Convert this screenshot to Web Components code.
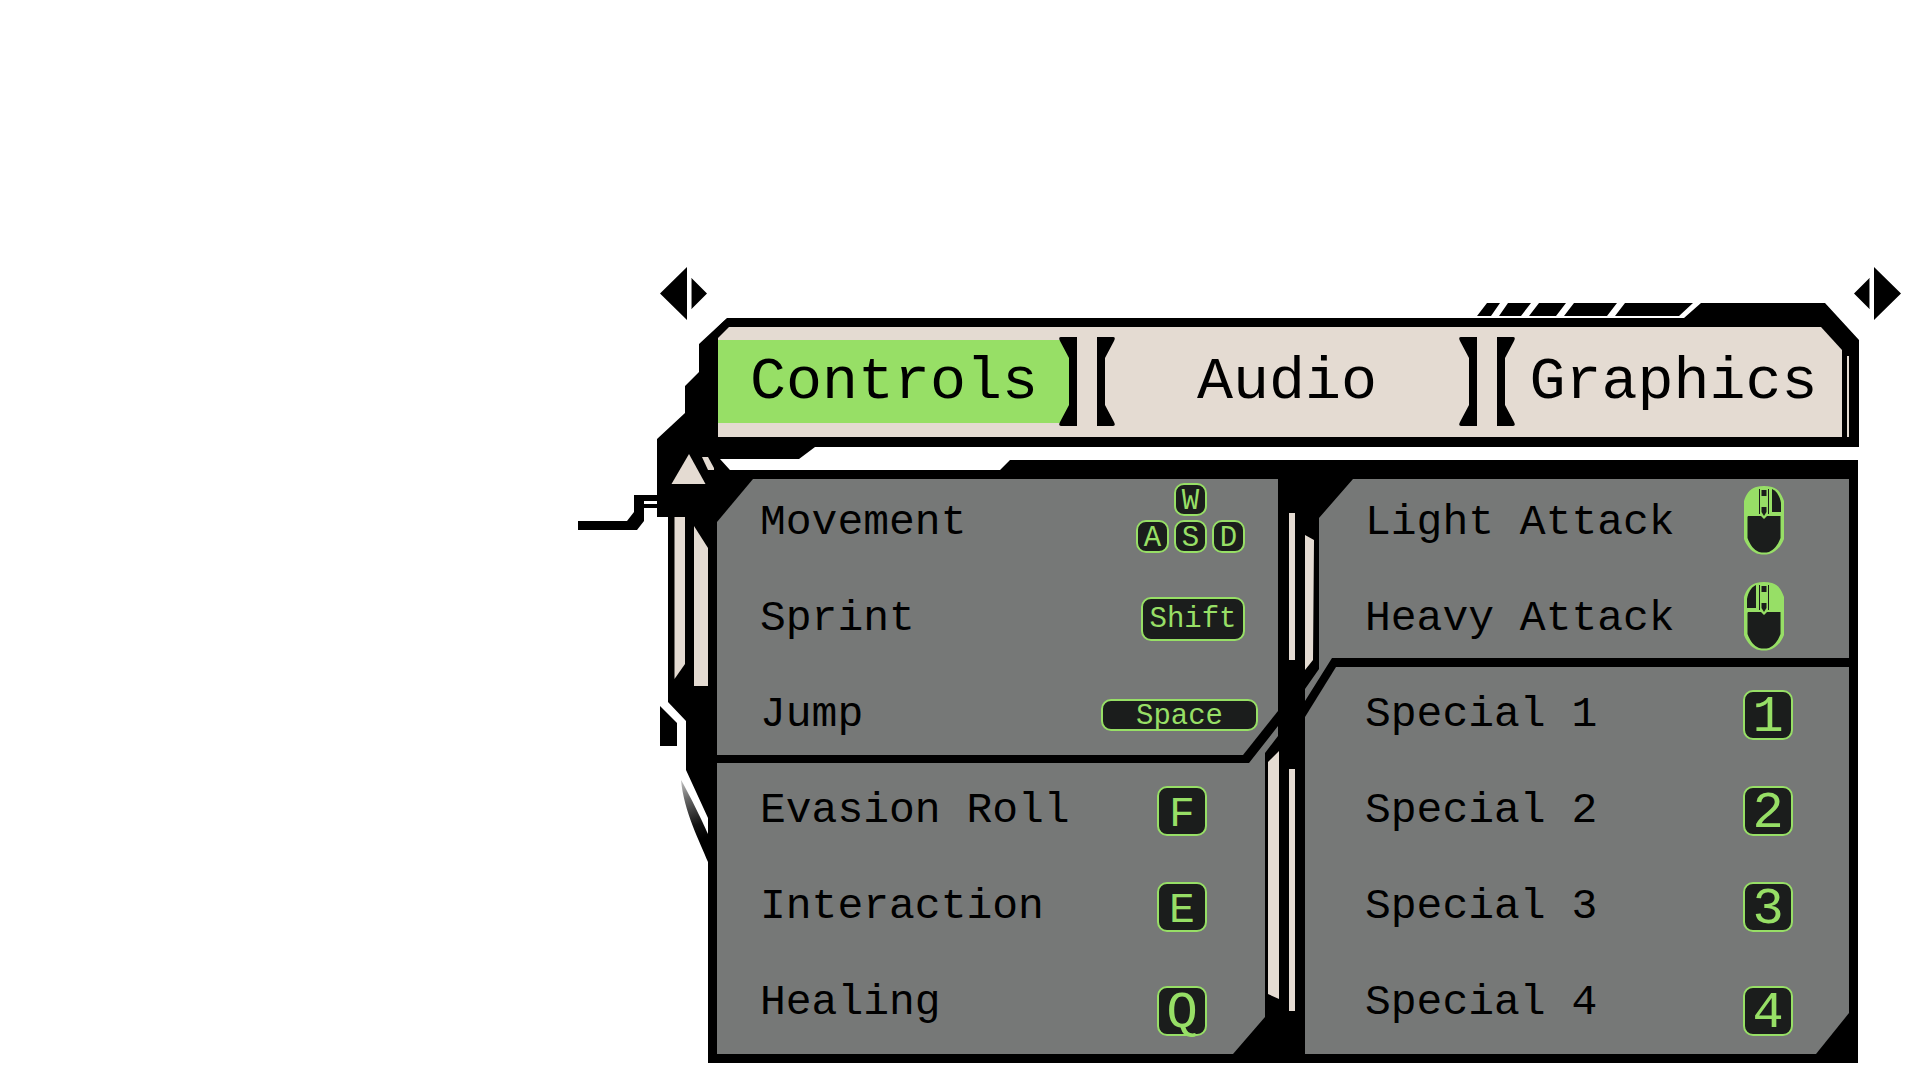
<!DOCTYPE html>
<html lang="en">
<head>
<meta charset="utf-8">
<title>Settings - Controls</title>
<style>
  :root {
    --ink: #000;
    --sand: #e4dbd2;
    --lime: #97df66;
    --steel: #767877;
    --coal: #1b1d1c;
  }
  body {
    margin: 0;
    background: #fff;
    color: var(--ink);
    font-family: "Liberation Mono", "DejaVu Sans Mono", monospace;
  }
</style>
</head>
<body>
<settings-menu>
  <menu-arrow slot="arrows" label="Previous tab"></menu-arrow>
  <menu-arrow slot="arrows" label="Next tab" flip></menu-arrow>
  <frame-ornament slot="ornament"></frame-ornament>
  <tab-bar slot="tabs">
    <menu-tab open-start selected style="--grow:359">Controls</menu-tab>
    <menu-tab style="--grow:380">Audio</menu-tab>
    <menu-tab open-end style="--grow:345">Graphics</menu-tab>
  </tab-bar>
  <control-panel slot="panel">
    <binding-group slot="left" shape="upper-left">
      <key-binding name="Movement" align="end" top><key-cluster></key-cluster></key-binding>
      <key-binding name="Sprint" align="end"><key-cap size="wide">Shift</key-cap></key-binding>
      <key-binding name="Jump" align="start"><key-cap size="bar">Space</key-cap></key-binding>
    </binding-group>
    <binding-group slot="left" shape="lower-left">
      <key-binding name="Evasion Roll"><key-cap>F</key-cap></key-binding>
      <key-binding name="Interaction"><key-cap>E</key-cap></key-binding>
      <key-binding name="Healing" low><key-cap size="large">Q</key-cap></key-binding>
    </binding-group>
    <spine-ornament slot="spine"></spine-ornament>
    <binding-group slot="right" shape="upper-right">
      <key-binding name="Light Attack" align="start"><mouse-icon button="left"></mouse-icon></key-binding>
      <key-binding name="Heavy Attack" align="start"><mouse-icon button="right"></mouse-icon></key-binding>
    </binding-group>
    <binding-group slot="right" shape="lower-right">
      <key-binding name="Special 1"><key-cap size="large">1</key-cap></key-binding>
      <key-binding name="Special 2"><key-cap size="large">2</key-cap></key-binding>
      <key-binding name="Special 3"><key-cap size="large">3</key-cap></key-binding>
      <key-binding name="Special 4" low><key-cap size="large">4</key-cap></key-binding>
    </binding-group>
  </control-panel>
</settings-menu>

<script>
function define(name, render) {
  customElements.define(name, class extends HTMLElement {
    constructor() {
      super();
      this.attachShadow({ mode: "open" });
    }
    connectedCallback() {
      this.shadowRoot.innerHTML = render(this);
    }
  });
}

define("settings-menu", () => `
  <style>
    :host {
      display: grid;
      grid-template-columns: 578fr 130px 1151fr 61px;
      grid-template-rows: auto auto auto;
      padding: 267px 0 16px;
    }
    .arrows {
      grid-column: 2 / 5;
      display: flex;
      justify-content: space-between;
      padding: 0 19px 0 82px;
      margin-bottom: -17px;
    }
    .ornament { grid-column: 2; grid-row: 2 / 4; z-index: 1; }
    .tabs { grid-column: 3; grid-row: 2; min-width: 0; }
    .panel { grid-column: 3; grid-row: 3; min-width: 0; padding: 13px 1px 0 0; }
  </style>
  <div class="arrows"><slot name="arrows"></slot></div>
  <div class="ornament"><slot name="ornament"></slot></div>
  <nav class="tabs"><slot name="tabs"></slot></nav>
  <main class="panel"><slot name="panel"></slot></main>`);

define("menu-arrow", el => `
  <style>
    :host { display: block; }
    :host([flip]) svg { transform: scaleX(-1); }
    button { display: block; border: 0; padding: 0; background: none; cursor: pointer; }
    svg { display: block; }
  </style>
  <button type="button" aria-label="${el.getAttribute("label")}">
    <svg width="47" height="53" viewBox="0 0 47 53" aria-hidden="true">
      <path d="M0 26.5 27 0V53Z M31.5 11 47 26.5 31.5 42Z"/>
      <path d="M31.5 11V42" stroke="#888" fill="none"/>
    </svg>
  </button>`);

define("frame-ornament", () => `
  <style>
    :host { display: block; }
    svg { display: block; overflow: visible; pointer-events: none; }
  </style>
  <svg width="130" height="567" viewBox="578 303 130 567" aria-hidden="true">
    <defs>
      <linearGradient id="fade" x1="682" y1="782" x2="704" y2="838" gradientUnits="userSpaceOnUse">
        <stop offset="0" stop-color="#bbb"/><stop offset=".3" stop-color="#666"/>
        <stop offset=".75" stop-color="#111"/><stop offset="1"/>
      </linearGradient>
    </defs>
    <path d="M727 318 699 344V372L685 386V413L657 439V517H668V702L686 721V770L708 818V480H739L720 459H799L815 447H709V340Z"/>
    <path d="M578 521H627L634 512V495H658V501H644V504H658V508H644V521L637 530H578Z"/>
    <path d="M660 706 677 723V746H660Z"/>
    <path d="M681 780C687 790 702 820 708 834V862C700 842 684 812 681 780Z" fill="url(#fade)"/>
    <g fill="#e4dbd2">
      <path d="M689 454 705.5 484H671.5Z"/>
      <path d="M702 457H708L714 468V470H708Z"/>
      <path d="M674.5 517H685V664L674.5 679Z"/>
      <path d="M694 526 708 548V686H694Z"/>
    </g>
  </svg>`);

define("tab-bar", () => `
  <style>
    :host { display: block; position: relative; }
    .frame {
      padding: 24px 17px 10px 10px;
      background: var(--ink);
      clip-path: polygon(0 34px, 19px 15px, calc(100% - 175px) 15px, calc(100% - 158px) 0,
        calc(100% - 34px) 0, 100% 37px, 100% 100%, 0 100%);
    }
    .tabs {
      display: flex;
      gap: 20px;
      padding: 10px 0 11px;
      background: var(--sand);
      clip-path: polygon(0 11px, 11px 0, calc(100% - 21px) 0, 100% 23px, 100% 100%, 0 100%);
    }
    .slashes { position: absolute; top: 0; right: 166px; }
    .slit { position: absolute; top: 53px; right: 10px; bottom: 10px; width: 2px; background: var(--sand); }
  </style>
  <div class="frame"><div class="tabs" role="tablist"><slot></slot></div></div>
  <svg class="slashes" width="216" height="13" viewBox="0 0 216 13" aria-hidden="true">
    <path d="M10 0H23L14 13H0Z M31 0H54L44 13H22Z M62 0H89L79 13H52Z M97 0H140L130 13H87Z M148 0H216L202 13H138Z"/>
  </svg>
  <div class="slit"></div>`);

define("menu-tab", el => {
  const bracket = side => `
    <svg class="${side}" width="18" height="89" viewBox="0 0 18 89" aria-hidden="true">
      <path d="M18 0H2Q-1 0 1 4L10 21V68L1 85Q-1 89 2 89H18Z"/>
    </svg>`;
  return `
  <style>
    :host { display: block; flex: var(--grow) 1 0; min-width: 0; }
    button {
      display: flex;
      align-items: center;
      width: 100%;
      padding: 0;
      border: 0;
      background: none;
      color: inherit;
      font: 60px/81px "Liberation Mono", "DejaVu Sans Mono", monospace;
      cursor: pointer;
    }
    span { flex: 1; min-width: 0; margin: 0 -10px; padding-top: 2px; }
    :host([open-start]) span { margin-left: 0; }
    :host([open-end]) span { margin-right: 0; }
    :host([selected]) span { background: var(--lime); margin-right: -11px; }
    svg { flex: none; display: block; position: relative; }
    .start { transform: scaleX(-1); }
  </style>
  <button type="button" role="tab" aria-selected="${el.hasAttribute("selected")}">
    ${el.hasAttribute("open-start") ? "" : bracket("start")}
    <span><slot></slot></span>
    ${el.hasAttribute("open-end") ? "" : bracket("end")}
  </button>`;
});

define("control-panel", () => `
  <style>
    :host {
      display: grid;
      grid-template-columns: 561fr 27px 544fr;
      padding: 19px 9px 9px;
      background: var(--ink);
      clip-path: polygon(0 10px, 292px 10px, 302px 0, 100% 0, 100% 100%, 0 100%);
    }
    section { display: flex; flex-direction: column; min-width: 0; }
    .left { --label-inset: 43px; --key-width: 162px; --key-inset: 15px; }
    .right { --label-inset: 60px; --key-width: 50px; --key-inset: 56px; }
    .spine { z-index: 1; }
  </style>
  <section class="left"><slot name="left"></slot></section>
  <div class="spine"><slot name="spine"></slot></div>
  <section class="right"><slot name="right"></slot></section>`);

define("spine-ornament", () => `
  <style>
    :host { display: block; }
    svg { display: block; overflow: visible; }
  </style>
  <svg width="27" height="575" viewBox="1278 479 27 575" fill="#e4dbd2" aria-hidden="true">
    <path d="M1289 513H1295V660H1289Z M1305 535 1314 540 1313 660 1305 670Z"/>
    <path d="M1268 762 1279 751V999L1268 994Z M1289 769H1295V1011H1289Z"/>
  </svg>`);

define("binding-group", () => `
  <style>
    :host {
      display: flex;
      flex-direction: column;
      gap: 16px;
      background: var(--steel);
    }
    :host([shape="upper-left"]) {
      padding-top: 4px;
      clip-path: polygon(0 43px, 36px 0, 100% 0, 100% 232px, calc(100% - 35px) 100%, 0 100%);
    }
    :host([shape="lower-left"]) {
      margin-top: -29px;
      padding: 45px 0 11px;
      clip-path: polygon(0 37px, calc(100% - 29px) 37px, 100% 0, 100% 10px, calc(100% - 13px) 27px,
        calc(100% - 13px) calc(100% - 37px), calc(100% - 45px) 100%, 0 100%);
    }
    :host([shape="upper-right"]) {
      padding: 4px 0 42px;
      clip-path: polygon(14px 39px, 48px 0, 100% 0, 100% 179px, 27px 179px, 0 100%, 0 210px, 14px 190px);
    }
    :host([shape="lower-right"]) {
      margin-top: -34px;
      padding: 8px 0 11px;
      clip-path: polygon(31px 0, 100% 0, 100% calc(100% - 41px), calc(100% - 33px) 100%, 0 100%, 0 50px);
    }
  </style>
  <slot></slot>`);

define("key-binding", el => `
  <style>
    :host {
      display: flex;
      align-items: center;
      justify-content: space-between;
      height: 80px;
      padding: 0 var(--key-inset) 0 var(--label-inset);
    }
    .name { font-size: 43px; line-height: 48px; white-space: nowrap; }
    .keys {
      display: flex;
      flex: none;
      box-sizing: border-box;
      width: var(--key-width);
      justify-content: center;
    }
    :host([align="start"]) .keys { justify-content: flex-start; }
    :host([align="end"]) .keys { justify-content: flex-end; padding-right: 18px; }
    :host([top]) .keys { align-self: flex-start; }
    :host([low]) .keys { padding-top: 16px; }
  </style>
  <span class="name">${el.getAttribute("name")}</span>
  <span class="keys"><slot></slot></span>`);

define("key-cap", () => `
  <style>
    :host { display: block; --w: 50px; --h: 50px; --size: 43px; --drop: 6px; }
    :host([size="large"]) { --size: 52px; }
    :host([size="small"]) { --w: 33px; --h: 33px; --size: 29px; --drop: 4px; }
    :host([size="wide"]) { --w: 104px; --h: 44px; --size: 29px; --drop: 0px; }
    :host([size="bar"]) { --w: 157px; --h: 32px; --size: 29px; --drop: 2px; }
    kbd {
      display: flex;
      align-items: center;
      justify-content: center;
      box-sizing: border-box;
      width: var(--w);
      height: var(--h);
      padding-top: var(--drop);
      border: 2px solid var(--lime);
      border-radius: 10px;
      background: var(--coal);
      color: var(--lime);
      font-family: inherit;
      font-size: var(--size);
      line-height: 1;
    }
  </style>
  <kbd><slot></slot></kbd>`);

define("key-cluster", () => `
  <style>
    :host { display: flex; flex-direction: column; align-items: center; gap: 4px; }
    div { display: flex; gap: 5px; }
  </style>
  <key-cap size="small">W</key-cap>
  <div>
    <key-cap size="small">A</key-cap>
    <key-cap size="small">S</key-cap>
    <key-cap size="small">D</key-cap>
  </div>`);

define("mouse-icon", el => {
  const right = el.getAttribute("button") === "right";
  return `
  <style>
    :host { display: block; padding: 0 0 5px 1px; }
    svg { display: block; }
  </style>
  <svg width="40" height="69" viewBox="0 0 40 69" role="img" aria-label="${right ? "Right" : "Left"} mouse button">
    <path fill="#97df66" d="M12 1Q20-1 28 1C35 3 38 9 40 15V53C37 61 31 67 25 68Q20 69 15 68C9 67 3 61 0 53V15C2 9 5 3 12 1Z"/>
    <path fill="#1b1d1c" d="M4 30H17L20 33 23 30H36.500V52C34 59 30 64 25 66Q20 67 15 66C10 64 6 59 3.500 52V31Z"/>
    <path fill="#1b1d1c" d="${right ? "M12 3V26H3V17C4 11 7 5 12 3Z" : "M28 3V26H37V17C36 11 33 5 28 3Z"}"/>
    <path fill="#1b1d1c" d="M17.500 4H22.500V10H17.500Z M17.500 21H22.500V26L20 30 17.500 26Z"/>
    <path stroke="#1b1d1c" fill="none" d="M15.500 3V28M24.500 3V28"/>
  </svg>`;
});
</script>
</body>
</html>
